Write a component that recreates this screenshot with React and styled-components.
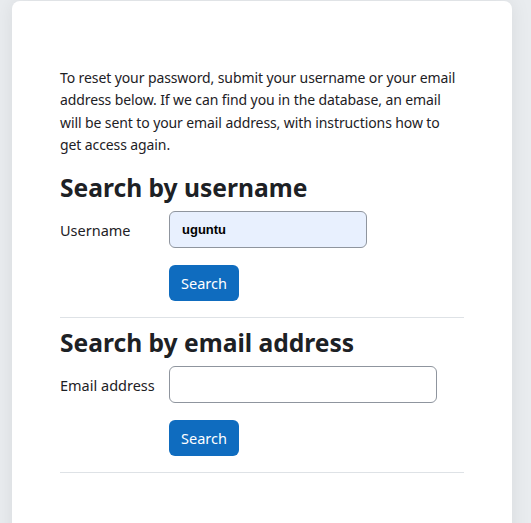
import React from 'react'
import styled, { createGlobalStyle } from 'styled-components'

const GlobalStyle = createGlobalStyle`
    html, body {
        margin: 0;
        padding: 0;
        background: #e9ecef;
        font-family: "Noto Sans", "Open Sans", sans-serif;
        color: #1d2125;
    }
`

const Page = styled.div`
    padding: 1px 19px 0 12px;
    min-height: 523px;
    box-sizing: border-box;
`

const Card = styled.div`
    width: 500px;
    min-height: 560px;
    background: #fff;
    border-radius: 8px;
    box-shadow: 0 0 20px rgba(0, 0, 0, 0.08);
    padding: 66px 48px 0;
    box-sizing: border-box;
`

const Intro = styled.p`
    max-width: 398px;
    margin: 0 0 17px;
    font-size: 14px;
    letter-spacing: -0.1px;
    line-height: 22.3px;
`

const Heading = styled.h3`
    margin: 0 0 8px;
    font-size: 24.6px;
    line-height: 30px;
    font-weight: 700;
`

const Row = styled.div`
    display: grid;
    grid-template-columns: 109px auto;
    align-items: center;
    margin-bottom: ${(p) => p.gap ?? 17}px;
`

const Label = styled.label`
    font-size: 14.5px;
`

const Input = styled.input`
    width: ${(p) => p.width}px;
    height: 37px;
    box-sizing: border-box;
    border: 1px solid #8f959e;
    border-radius: 6px;
    background: ${(p) => (p.filled ? '#e8f0fe' : '#fff')};
    padding: 0 12px;
    font-family: "Liberation Sans", Arial, sans-serif;
    font-size: 13px;
    font-weight: 600;
    color: #000;
    outline: none;
`

const Button = styled.button`
    grid-column: 2;
    justify-self: start;
    height: 36px;
    padding: 0 12px;
    border: none;
    border-radius: 6px;
    background: #0f6cbf;
    color: #fff;
    font-family: "Noto Sans", "Open Sans", sans-serif;
    font-size: 14.5px;
`

const Divider = styled.hr`
    border: none;
    border-top: 1px solid #dee2e6;
    margin: 16px 0 10px;
`

const SearchSection = ({ title, label, value, width }) => (
    <section>
        <Heading>{ title }</Heading>
        <Row>
            <Label>{ label }</Label>
            <Input width={ width } filled={ !!value } defaultValue={ value } />
        </Row>
        <Row gap={ 0 }>
            <Button>Search</Button>
        </Row>
        <Divider />
    </section>
)

export default function App() {
    return (
        <Page>
            <GlobalStyle />
            <Card>
                <Intro>
                    To reset your password, submit your username or your email address below. If we can find you in the database, an email will be sent to your email address, with instructions how to get access again.
                </Intro>
                <SearchSection title="Search by username" label="Username" value="uguntu" width={ 198 } />
                <SearchSection title="Search by email address" label="Email address" value="" width={ 268 } />
            </Card>
        </Page>
    )
}
